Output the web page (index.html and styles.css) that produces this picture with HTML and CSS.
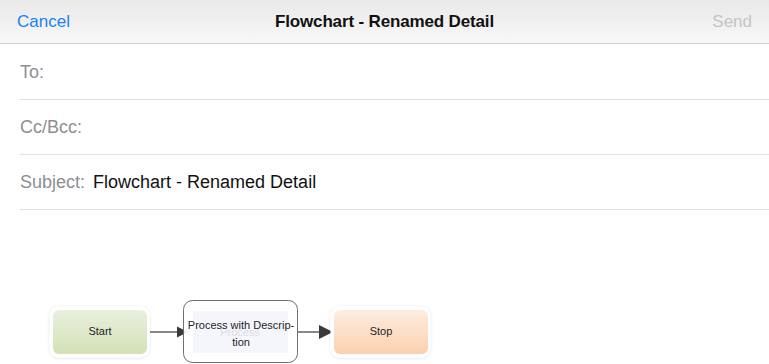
FILE: index.html
```html
<!DOCTYPE html>
<html lang="en">
<head>
  <meta charset="UTF-8" />
  <meta name="viewport" content="width=device-width, initial-scale=1.0" />
  <title>Flowchart - Renamed Detail</title>
  <link rel="stylesheet" href="styles.css">
</head>
<body>
  <header class="nav-bar">
    <a href="#" class="nav-cancel">Cancel</a>
    <h1 class="nav-title">Flowchart - Renamed Detail</h1>
    <span class="nav-send">Send</span>
  </header>

  <div class="fields">
    <div class="field">
      <span class="field-label">To:</span>
    </div>
    <div class="field">
      <span class="field-label">Cc/Bcc:</span>
    </div>
    <div class="field">
      <span class="field-label">Subject:</span>
      <span class="field-value">Flowchart - Renamed Detail</span>
    </div>
  </div>

  <div class="message-body">
    <svg class="flowchart" width="769" height="154" viewBox="0 0 769 154">
      <defs>
        <linearGradient id="startFill" x1="0" y1="0" x2="0" y2="1">
          <stop offset="0" stop-color="#e9f0de" />
          <stop offset="1" stop-color="#d2e1b7" />
        </linearGradient>
        <linearGradient id="stopFill" x1="0" y1="0" x2="0" y2="1">
          <stop offset="0" stop-color="#fdede1" />
          <stop offset="1" stop-color="#fbd0ae" />
        </linearGradient>
        <filter id="halo" x="-10%" y="-20%" width="120%" height="140%">
          <feDropShadow dx="0" dy="0.5" stdDeviation="1.4" flood-color="#000" flood-opacity="0.13" />
        </filter>
      </defs>

      <!-- Start -->
      <rect x="49.5" y="96.5" width="100" height="51" rx="9" fill="#fff" filter="url(#halo)" />
      <rect x="53" y="100" width="94" height="44" rx="6" fill="url(#startFill)" />
      <text class="node-text" x="100" y="125">Start</text>

      <!-- arrow start -> process -->
      <line x1="150" y1="122" x2="180" y2="122" class="edge" />
      <polygon points="177,116.5 177,127.5 188,122" class="edge-head" />

      <!-- Process -->
      <rect x="183.5" y="90.5" width="114" height="62" rx="9" fill="#fff" fill-opacity="0.9" stroke="#6e6e6e" />
      <rect x="193" y="101" width="95" height="42" fill="#f4f6fb" />
      <text class="ghost-text" x="240" y="126">Process</text>
      <text class="node-text" x="241" y="119">Process with Descrip-</text>
      <text class="node-text" x="241" y="136">tion</text>

      <!-- arrow process -> stop -->
      <line x1="298" y1="122" x2="321" y2="122" class="edge" />
      <polygon points="319,115 319,129 333,122" class="edge-head" />

      <!-- Stop -->
      <rect x="330.5" y="96.5" width="100" height="51" rx="9" fill="#fff" filter="url(#halo)" />
      <rect x="334" y="100" width="94" height="44" rx="6" fill="url(#stopFill)" />
      <text class="node-text" x="381" y="125">Stop</text>
    </svg>
  </div>
</body>
</html>
```

FILE: styles.css
```css
body {
  margin: 0;
  font-family: "Liberation Sans", Arial, Helvetica, sans-serif;
  background: #fff;
  color: #000;
  width: 769px;
  height: 364px;
  overflow: hidden;
}

.nav-bar {
  display: grid;
  grid-template-columns: 1fr auto 1fr;
  align-items: center;
  height: 43px;
  padding: 0 17px;
  background: linear-gradient(#e9e9e9, #f8f8f8);
  border-bottom: 1px solid #cfcfcf;
  font-size: 17px;
}

.nav-cancel {
  color: #1a80f8;
  text-decoration: none;
  justify-self: start;
}

.nav-title {
  margin: 0;
  font-size: 17px;
  font-weight: bold;
  letter-spacing: -0.15px;
  color: #111;
}

.nav-send {
  justify-self: end;
  color: #c4c4c4;
}

.fields {
  padding-top: 1px;
  padding-left: 20px;
}

.field {
  display: flex;
  align-items: center;
  height: 54px;
  border-bottom: 1px solid #e0e0e0;
  font-size: 18px;
}

.field-label {
  color: #8e8e93;
}

.field-value {
  margin-left: 8px;
  color: #111;
}

.message-body {
  height: 154px;
}

.flowchart {
  display: block;
}

.node-text {
  font-family: "Liberation Sans", Arial, sans-serif;
  font-size: 11px;
  fill: #1e1e1e;
  text-anchor: middle;
}

.ghost-text {
  font-family: "Liberation Sans", Arial, sans-serif;
  font-size: 11px;
  fill: #dcdde4;
  text-anchor: middle;
}

.edge {
  stroke: #4a4a4a;
  stroke-width: 1.3;
}

.edge-head {
  fill: #3a3a3a;
}
```
